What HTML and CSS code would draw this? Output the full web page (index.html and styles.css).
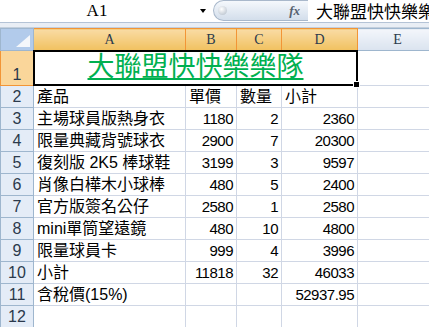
FILE: index.html
```html
<!DOCTYPE html>
<html lang="zh-Hant">
<head>
    <meta charset="UTF-8">
    <title>大聯盟快快樂樂隊</title>
    <link rel="stylesheet" href="styles.css">
</head>
<body>
    <div class="formula-bar">
        <div class="name-box">
            <span class="name">A1</span>
            <span class="arrow"></span>
        </div>
        <div class="fx-pill">
            <span class="knob"></span>
            <span class="fx">fx</span>
        </div>
        <div class="formula">大聯盟快快樂樂隊</div>
    </div>
    <div class="band"></div>

    <table class="sheet">
        <colgroup>
            <col class="c-head">
            <col class="c-a">
            <col class="c-b">
            <col class="c-c">
            <col class="c-d">
            <col class="c-e">
        </colgroup>
        <thead>
            <tr>
                <th class="corner"><span class="tri"></span></th>
                <th class="col sel">A</th>
                <th class="col sel">B</th>
                <th class="col sel">C</th>
                <th class="col sel">D</th>
                <th class="col">E</th>
            </tr>
        </thead>
        <tbody>
            <tr class="tall">
                <th class="row sel">1</th>
                <td class="title" colspan="4"><span>大聯盟快快樂樂隊</span></td>
                <td></td>
            </tr>
            <tr><th class="row">2</th><td>產品</td><td>單價</td><td>數量</td><td>小計</td><td></td></tr>
            <tr><th class="row">3</th><td>主場球員版熱身衣</td><td class="n">1180</td><td class="n">2</td><td class="n">2360</td><td></td></tr>
            <tr><th class="row">4</th><td>限量典藏背號球衣</td><td class="n">2900</td><td class="n">7</td><td class="n">20300</td><td></td></tr>
            <tr><th class="row">5</th><td>復刻版 2K5 棒球鞋</td><td class="n">3199</td><td class="n">3</td><td class="n">9597</td><td></td></tr>
            <tr><th class="row">6</th><td>肖像白樺木小球棒</td><td class="n">480</td><td class="n">5</td><td class="n">2400</td><td></td></tr>
            <tr><th class="row">7</th><td>官方版簽名公仔</td><td class="n">2580</td><td class="n">1</td><td class="n">2580</td><td></td></tr>
            <tr><th class="row">8</th><td>mini單筒望遠鏡</td><td class="n">480</td><td class="n">10</td><td class="n">4800</td><td></td></tr>
            <tr><th class="row">9</th><td>限量球員卡</td><td class="n">999</td><td class="n">4</td><td class="n">3996</td><td></td></tr>
            <tr><th class="row">10</th><td>小計</td><td class="n">11818</td><td class="n">32</td><td class="n">46033</td><td></td></tr>
            <tr><th class="row">11</th><td>含稅價(15%)</td><td></td><td></td><td class="n">52937.95</td><td></td></tr>
            <tr><th class="row">12</th><td></td><td></td><td></td><td></td><td></td></tr>
        </tbody>
    </table>
</body>
</html>
```

FILE: styles.css
```css
body {
    margin: 0;
    width: 429px;
    height: 327px;
    overflow: hidden;
    background: #ffffff;
    font-family: "Liberation Sans", "Noto Sans CJK TC", sans-serif;
    color: #000000;
}

/* formula bar */
.formula-bar {
    display: flex;
    height: 22px;
    background: #ffffff;
    border-bottom: 1px solid #b4c3d6;
}
.name-box {
    width: 211px;
    display: flex;
    align-items: center;
}
.name {
    flex: 1;
    text-align: center;
    padding-right: 6px;
    font-family: "Liberation Serif", serif;
    font-size: 17px;
    line-height: 22px;
}
.arrow {
    width: 0;
    height: 0;
    border-left: 3px solid transparent;
    border-right: 3px solid transparent;
    border-top: 4px solid #000000;
    margin-right: 5px;
}
.fx-pill {
    box-sizing: border-box;
    width: 95px;
    height: 21px;
    margin-left: 2px;
    border: 1px solid #a9b8cb;
    border-right: none;
    border-radius: 11px 0 0 11px;
    background: linear-gradient(#f5f8fc, #d3deeb);
    display: flex;
    align-items: center;
    justify-content: space-between;
    padding: 0 8px 0 4px;
}
.knob {
    width: 9px;
    height: 9px;
    border-radius: 50%;
    background: radial-gradient(circle at 40% 35%, #ffffff, #aeb9c6);
}
.fx {
    font-family: "Liberation Serif", serif;
    font-style: italic;
    font-weight: bold;
    font-size: 13px;
    color: #56616f;
}
.formula {
    flex: 1;
    padding-left: 8px;
    overflow: hidden;
    white-space: nowrap;
    font-family: "Noto Sans CJK TC", sans-serif;
    font-size: 17px;
    line-height: 22px;
}
.band {
    height: 4px;
    background: #e9eef5;
    border-bottom: 1px solid #c3cfdd;
}

/* sheet grid */
.sheet {
    border-collapse: collapse;
    table-layout: fixed;
    width: 437px;
}
.c-head { width: 33px; }
.c-a { width: 152px; }
.c-b { width: 51px; }
.c-c { width: 45px; }
.c-d { width: 76px; }
.c-e { width: 80px; }

.sheet th,
.sheet td {
    padding: 0 3px;
    height: 21px;
    white-space: nowrap;
    overflow: hidden;
}
.sheet td {
    border: 1px solid #d0d7e5;
    font-size: 16px;
    vertical-align: bottom;
    line-height: 20px;
}
.sheet td.n {
    text-align: right;
    font-size: 15px;
    letter-spacing: -0.5px;
}
.sheet tr.tall td,
.sheet tr.tall th {
    height: 34px;
}

.sheet th {
    font-weight: normal;
    color: #2b3a4c;
    border: 1px solid #9eb6ce;
}
.corner {
    background: #b2cbeb;
    position: relative;
}
.tri {
    position: absolute;
    right: 3px;
    bottom: 3px;
    width: 0;
    height: 0;
    border-left: 14px solid transparent;
    border-bottom: 12px solid #f4f7fb;
}
.col {
    height: 20px;
    font-family: "Liberation Serif", serif;
    font-size: 14px;
    background: linear-gradient(#f3f6fb, #dae3ef);
}
.col.sel {
    background: linear-gradient(#f9dba4, #f1c15f);
    border-color: #f29536;
}
.row {
    background: #e4ecf7;
    text-align: center;
    vertical-align: bottom;
    font-size: 16px;
    line-height: 20px;
}
.row.sel {
    background: #fad69a;
    border-color: #f29536;
}

/* merged title cell A1:D1 */
.sheet td.title {
    position: relative;
    overflow: visible;
    text-align: center;
    vertical-align: top;
    padding-top: 0;
    font-family: "Noto Sans CJK TC", sans-serif;
    font-size: 27px;
    line-height: 28px;
    color: #00b050;
}
.title span {
    text-decoration: underline;
    text-decoration-color: #00b050;
    text-decoration-thickness: 2px;
    text-underline-offset: 2px;
}
.title::after {
    content: "";
    position: absolute;
    left: -1px;
    top: -1px;
    right: -1px;
    bottom: -1px;
    border: 2px solid #000000;
}
.title::before {
    content: "";
    position: absolute;
    right: -3px;
    bottom: -3px;
    width: 5px;
    height: 5px;
    background: #000000;
    border: 1px solid #ffffff;
    z-index: 1;
}
```
